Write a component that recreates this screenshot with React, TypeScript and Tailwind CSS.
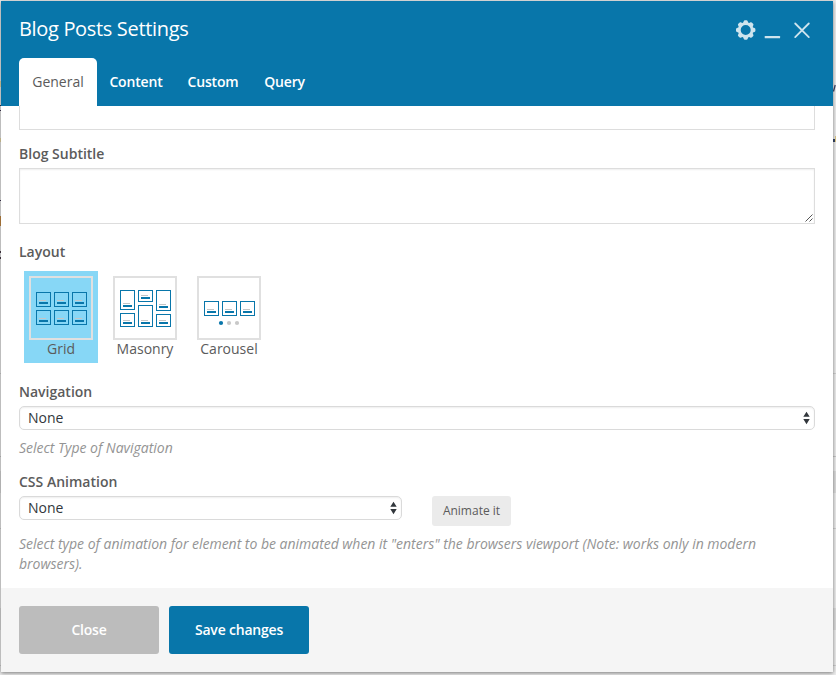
import React from "react";

type Box = [x: number, y: number, h: number];

const gridBoxes: Box[] = [
  [5, 14, 15], [23, 14, 15], [41, 14, 15],
  [5, 32, 15], [23, 32, 15], [41, 32, 15],
];
const masonryBoxes: Box[] = [
  [5, 12, 20], [5, 35, 14],
  [23, 12, 12], [23, 27, 22],
  [41, 12, 21], [41, 36, 13],
];
const carouselBoxes: Box[] = [[5, 23, 15], [23, 23, 15], [41, 23, 15]];

function LayoutOption({ label, boxes, active, dots }: { label: string; boxes: Box[]; active?: boolean; dots?: boolean }) {
  return (
    <div className={`flex h-[92px] w-[74px] flex-col items-center pt-[5px] ${active ? "bg-[#87d7f6]" : ""}`}>
      <svg width="64" height="64" viewBox="-2 -2 64 64" className="shrink-0">
        <rect x="-1" y="-1" width="62" height="62" fill={active ? "none" : "#fff"} stroke="#e0e0e0" strokeWidth="2" />
        {boxes.map(([x, y, h]) => (
          <g key={`${x}-${y}`}>
            <rect x={x + 0.5} y={y + 0.5} width="14" height={h - 1} fill="none" stroke="#0876aa" />
            <rect x={x + 3} y={y + h - 7} width="7" height="1" fill="#c4c6c7" />
            <rect x={x + 3} y={y + h - 5} width="9" height="2" fill="#0876aa" />
          </g>
        ))}
        {dots && (
          <>
            <circle cx="22" cy="45" r="2.1" fill="#0876aa" />
            <circle cx="30" cy="45" r="2.1" fill="#c8c8c8" />
            <circle cx="38" cy="45" r="2.1" fill="#c8c8c8" />
          </>
        )}
      </svg>
      <span className="text-[14px] leading-[18px]">{label}</span>
    </div>
  );
}

function Select({ className }: { className: string }) {
  return (
    <div className={`flex h-6 items-center justify-between rounded-[5px] border border-[#dadada] bg-white pr-1 pl-2 text-[#32373c] shadow-[inset_0_1px_2px_rgba(0,0,0,0.07)] ${className}`}>
      <span className="text-[14px] leading-[22px]">None</span>
      <svg width="7" height="14" viewBox="0 0 7 14" fill="#32373c">
        <path d="M3.5 .7 6.7 5.8H.3zM3.5 13.2.3 8.1h6.4z" />
      </svg>
    </div>
  );
}

function Heading({ children, className = "" }: { children: React.ReactNode; className?: string }) {
  return <div className={`text-[14px] leading-5 font-semibold ${className}`}>{children}</div>;
}

export default function App() {
  const gear = Array.from({ length: 8 }, (_, i) => i * 45);
  return (
    <div className="relative h-[675px] w-[836px] overflow-hidden bg-[#eeeeee] pt-px pl-px font-['Open_Sans',sans-serif] text-[14px] text-[#5b5b5b]">
      {/* Page content peeking out around the dialog */}
      <svg className="absolute inset-0" width="836" height="675">
        <path d="M0 105h1v1H0zM0 110h1v1H0zM0 200h1v1H0z" fill="#39304f" />
        <path d="M0 81h1v6H0zM0 138h1v4H0z" fill="#eadba9" />
        <path d="M0 216h1v10H0z" fill="#c58a43" />
        <path d="M0 251h1v2H0zM0 257h1v2H0z" fill="#493c49" />
        <path d="M0 456h836v1H0z" fill="#c9c9c9" />
        <path d="M0 471h836v22H0zM0 608h836v22H0z" fill="#dedede" />
        <path d="M0 373h836v1H0zM0 528h836v1H0zM0 665h836v1H0z" fill="#d2d2d2" />
        <path d="m833.5 91.5 1.7-6.5" stroke="#394368" strokeWidth="1.3" />
        <path d="M833 139h2v3h-2z" fill="#354465" />
        <path d="M835 136h1v6h-1z" fill="#dfc989" />
      </svg>
      <div className="relative flex h-[671px] w-[832px] flex-col bg-white shadow-[0_1px_4px_rgba(0,0,0,0.5)]">
        <header className="flex h-[105px] shrink-0 flex-col justify-between bg-[#0876aa] px-[18px] text-white">
          <div className="flex h-[57px] items-start justify-between">
            <h1 className="pt-[14px] text-[20px] leading-7 tracking-[-0.33px]">Blog Posts Settings</h1>
            <svg width="84" height="28" viewBox="731 16 84 28" className="mt-[15px]" fill="#cee4ee">
              <path fillRule="evenodd" d="M745.7 22.3a7.7 7.7 0 1 0 0 15.4 7.7 7.7 0 0 0 0-15.4zm0 2.7a5 5 0 1 1 0 10 5 5 0 0 1 0-10z" />
              {gear.map((a) => (
                <path key={a} transform={`rotate(${a} 745.7 30)`} d="M742.9 23.5 743.7 21.2Q744 20.3 745 20.3H746.4Q747.4 20.3 747.7 21.2L748.5 23.5Z" />
              ))}
              <rect x="764.7" y="36" width="15.4" height="2.3" rx=".6" />
              <path d="m795.2 23.5 13.6 13.6m0-13.6-13.6 13.6" stroke="#cee4ee" strokeWidth="1.8" strokeLinecap="round" />
            </svg>
          </div>
          <nav className="flex h-12 text-[14px] leading-12 font-semibold tracking-[-0.16px]">
            <span className="w-[78px] rounded-t-[5px] bg-white text-center font-normal tracking-normal text-[#5b5b5b]">General</span>
            <span className="w-[78px] text-center">Content</span>
            <span className="w-[76px] text-center">Custom</span>
            <span className="w-[67px] text-center">Query</span>
          </nav>
        </header>
        <main className="flex h-[482px] shrink-0 flex-col px-[18px]">
          <div className="h-6 shrink-0 border border-t-0 border-[#dddddd]" />
          <Heading className="mt-[14px]">Blog Subtitle</Heading>
          <div className="mt-1 flex h-14 shrink-0 items-end justify-end border border-[#dddddd] p-px shadow-[inset_0_1px_2px_rgba(0,0,0,0.07)]">
            <svg width="8" height="8" viewBox="0 0 8 8" fill="none" stroke="#555"><path d="m.5 7.5 7-7m-3 7 3-3" /></svg>
          </div>
          <Heading className="mt-[18px]">Layout</Heading>
          <div className="mt-[9px] ml-[5px] flex gap-[10px]">
            <LayoutOption label="Grid" boxes={gridBoxes} active />
            <LayoutOption label="Masonry" boxes={masonryBoxes} />
            <LayoutOption label="Carousel" boxes={carouselBoxes} dots />
          </div>
          <Heading className="mt-[19px]">Navigation</Heading>
          <Select className="mt-1 w-full" />
          <p className="mt-2 leading-5 tracking-[-0.018px] text-[#949494] italic">Select Type of Navigation</p>
          <Heading className="mt-[14px]">CSS Animation</Heading>
          <div className="mt-1 flex h-[30px] items-start gap-[30px]">
            <Select className="w-[383px]" />
            <button className="h-[30px] w-[79px] rounded-[3px] bg-[#ebebeb] text-[12px] leading-[30px]">Animate it</button>
          </div>
          <p className="mt-2 leading-5 tracking-[-0.018px] text-[#949494] italic">
            Select type of animation for element to be animated when it "enters" the browsers viewport (Note: works only in modern<br />browsers).
          </p>
        </main>
        <footer className="flex flex-1 items-start gap-[10px] bg-[#f5f5f5] px-[18px] pt-[18px] text-[14px] font-semibold tracking-[-0.2px] text-white">
          <button className="h-12 w-[140px] rounded-[3px] bg-[#bcbcbc] pb-[2px]">Close</button>
          <button className="h-12 w-[140px] rounded-[3px] bg-[#0876aa] pb-[2px]">Save changes</button>
        </footer>
      </div>
    </div>
  );
}
